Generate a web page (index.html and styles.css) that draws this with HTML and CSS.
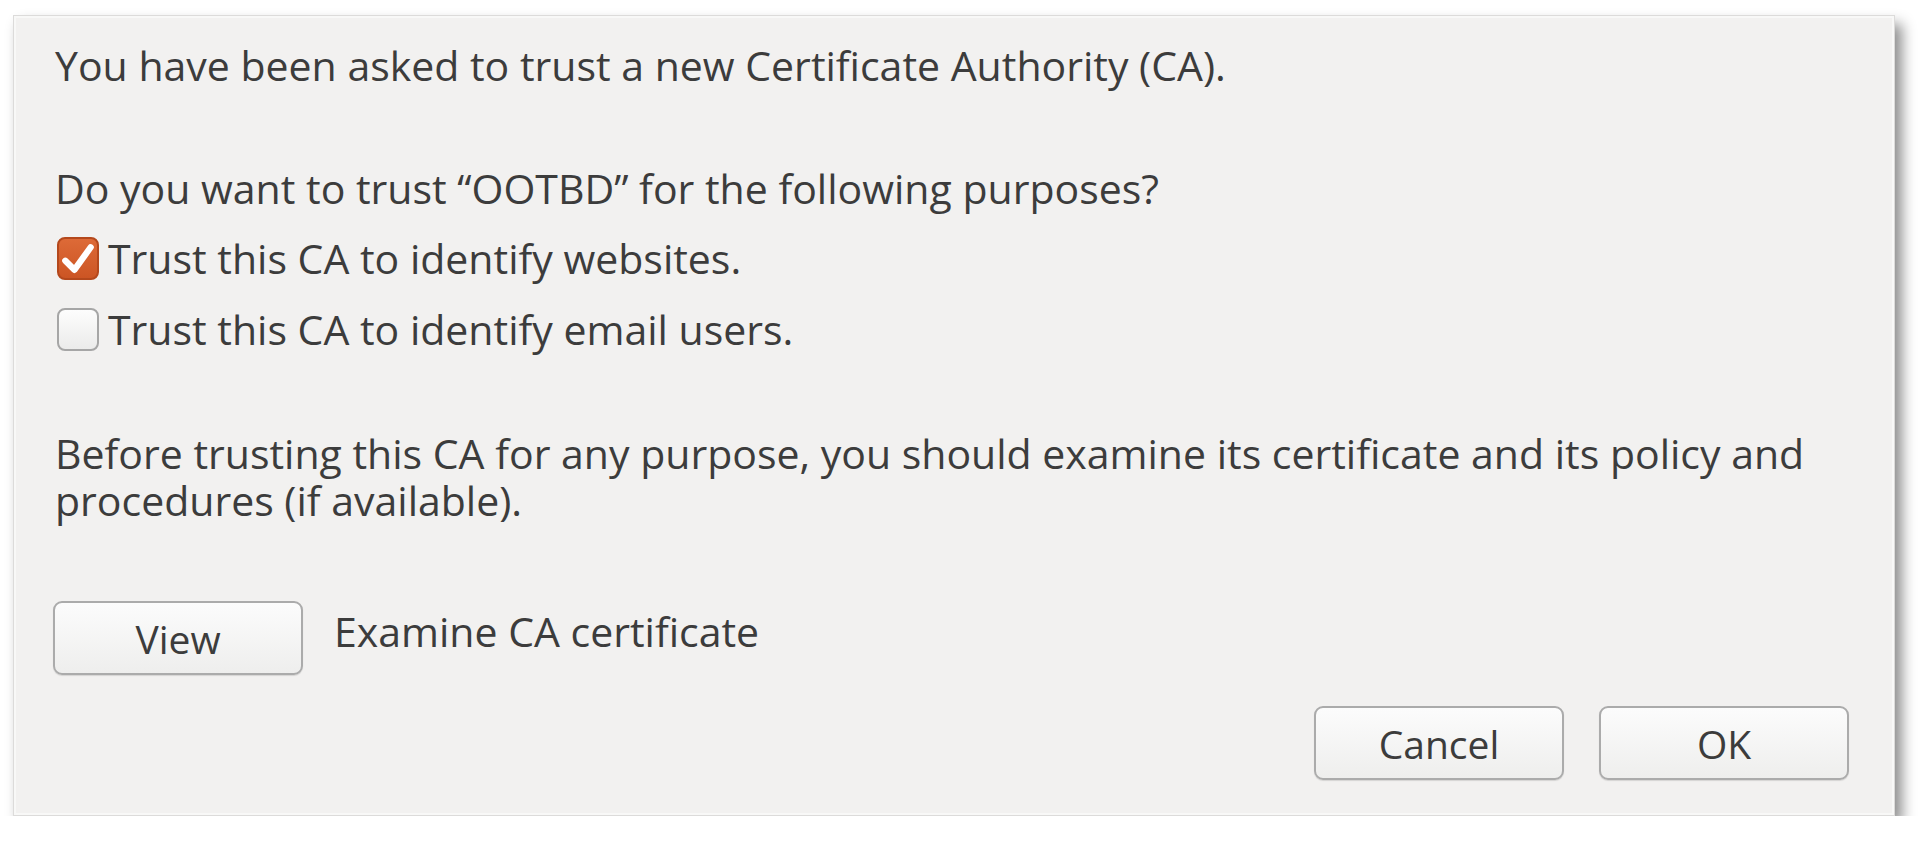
FILE: index.html
```html
<!DOCTYPE html>
<html lang="en">
<head>
    <meta charset="UTF-8">
    <meta name="viewport" content="width=device-width, initial-scale=1.0">
    <title>Downloading Certificate</title>
    <link rel="stylesheet" href="styles.css">
</head>
<body>
    <div class="dialog">
        <p class="intro">You have been asked to trust a new Certificate Authority (CA).</p>

        <p class="question">Do you want to trust &ldquo;OOTBD&rdquo; for the following purposes?</p>
        <label class="check-row first">
            <span class="box checked">
                <svg viewBox="0 0 42 42" width="42" height="42">
                    <path d="M7 23 L17 33 L35 8" fill="none" stroke="#fff" stroke-width="7" stroke-linecap="round" stroke-linejoin="round"/>
                </svg>
            </span>
            Trust this CA to identify websites.
        </label>
        <label class="check-row">
            <span class="box"></span>
            Trust this CA to identify email users.
        </label>

        <p class="note">Before trusting this CA for any purpose, you should examine its certificate and its policy and procedures (if available).</p>

        <div class="view-row">
            <button type="button" class="btn">View</button>
            <span class="view-label">Examine CA certificate</span>
        </div>

        <div class="actions">
            <button type="button" class="btn">Cancel</button>
            <button type="button" class="btn">OK</button>
        </div>
    </div>
</body>
</html>
```

FILE: styles.css
```css
body {
    margin: 0;
    padding: 0;
    background: #fff;
    font-family: "Open Sans", "Noto Sans", sans-serif;
    color: #3c3c3c;
}
.dialog {
    box-sizing: border-box;
    width: 1882px;
    height: 801px;
    margin: 15px 0 0 13px;
    padding: 26px 45px 0 41px;
    display: flex;
    flex-direction: column;
    background: #f2f1f0;
    border: 1px solid #dcdbda;
    box-shadow: inset 0 0 0 2px #f8f8f7, 7px 9px 13px rgba(0, 0, 0, 0.45);
    font-size: 41px;
    line-height: 47px;
}
p {
    margin: 0;
}
.question {
    margin-top: 76px;
}
.check-row {
    display: flex;
    align-items: center;
    gap: 9px;
    margin-top: 24px;
}
.check-row.first {
    margin-top: 23px;
}
.box {
    box-sizing: border-box;
    flex: none;
    width: 42px;
    height: 43px;
    margin-left: 2px;
    border: 2px solid #a6a6a6;
    border-radius: 8px;
    background: linear-gradient(#fdfdfd, #ebebea);
    display: flex;
    align-items: center;
    justify-content: center;
}
.box.checked {
    border-color: #b4481c;
    background: linear-gradient(#dd6a37, #cc5524);
}
.box svg {
    display: block;
}
.note {
    margin-top: 77px;
}
.view-row {
    display: flex;
    align-items: flex-start;
    gap: 31px;
    margin-top: 77px;
}
.view-row .btn {
    margin-left: -2px;
}
.view-label {
    margin-top: 7px;
}
.actions {
    display: flex;
    justify-content: flex-end;
    gap: 35px;
    margin-top: 31px;
}
.btn {
    box-sizing: border-box;
    width: 250px;
    height: 74px;
    padding: 0;
    font-family: inherit;
    font-size: 39px;
    color: #3c3c3c;
    background: linear-gradient(#fcfcfc, #eeeeed);
    border: 2px solid #ababab;
    border-radius: 9px;
    box-shadow: 0 1px 1px rgba(0, 0, 0, 0.12);
}
```
